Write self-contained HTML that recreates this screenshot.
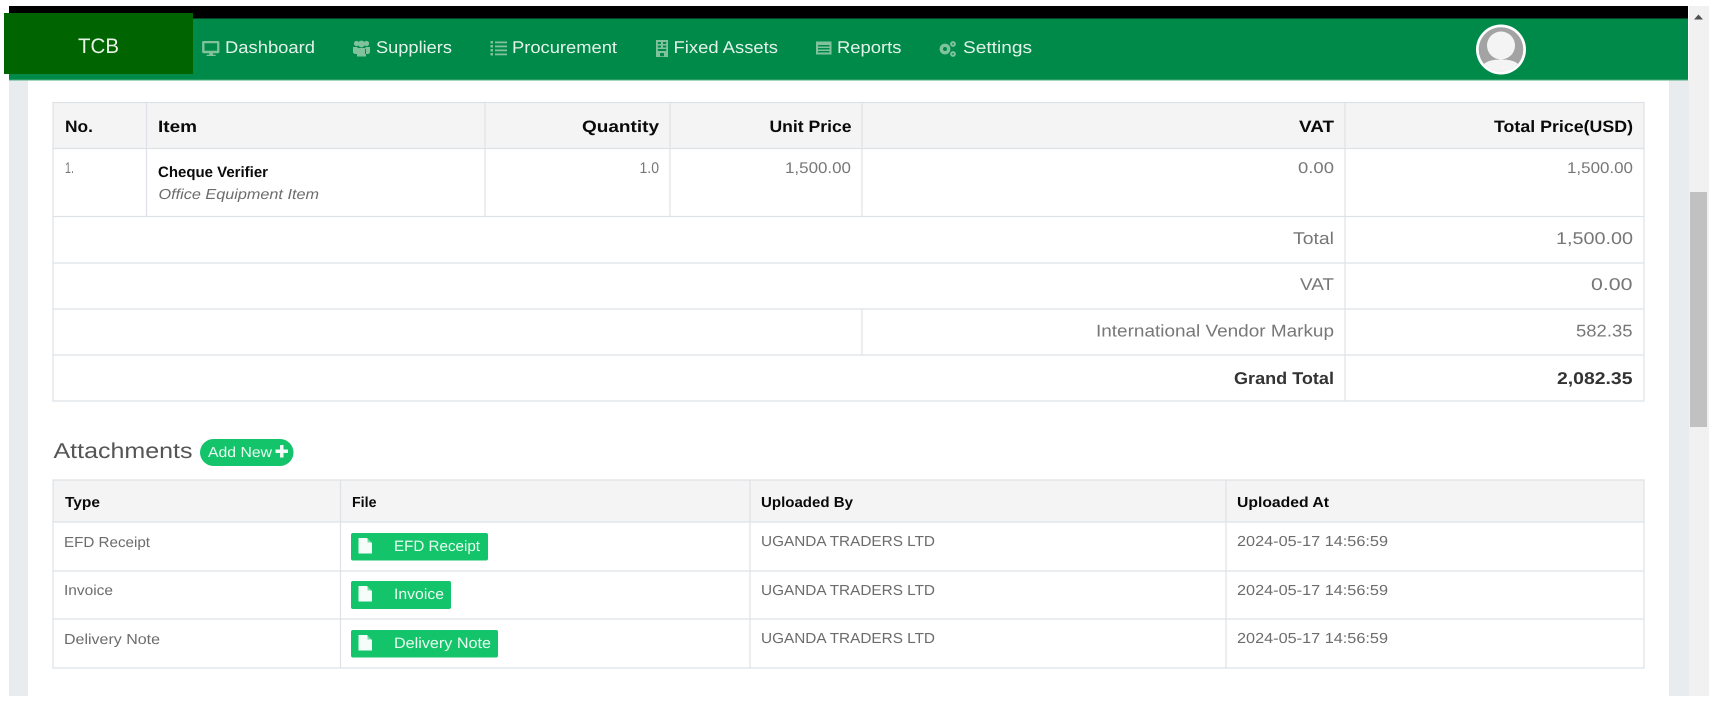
<!DOCTYPE html>
<html lang="en"><head><meta charset="utf-8"><title>TCB</title>
<style>
html,body{margin:0;padding:0;background:#fff;width:1718px;height:704px;overflow:hidden}
svg{display:block;filter:blur(.3px)}
text{font-family:"Liberation Sans",sans-serif;text-rendering:geometricPrecision}
.nav{font-size:17px;fill:#e2f2e8}
.th{font-size:16.5px;font-weight:bold;fill:#0a0a0a}
.td{font-size:15.5px;fill:#777}
.tl{font-size:17px;fill:#777}
.b{font-size:17px;font-weight:bold;fill:#333}
.t2h{font-size:14.5px;font-weight:bold;fill:#0a0a0a}
.t2{font-size:14.5px;fill:#6c6c6c}
.btn{font-size:15px;fill:#e8fbf0}
.l{stroke:#dee2e6;stroke-width:1.2;fill:none}
.ic{fill:#7fc29c}
</style></head><body>
<svg width="1718" height="704" viewBox="0 0 1718 704" xmlns="http://www.w3.org/2000/svg">
<rect width="1718" height="704" fill="#fff"/>
<!-- side gutters + scrollbar -->
<rect x="9" y="80" width="19" height="616" fill="#e9ecef"/>
<rect x="1669" y="80" width="20" height="616" fill="#e9ecef"/>
<rect x="1689" y="6" width="20" height="690" fill="#f1f1f1"/>
<path d="M1694 19.5L1698.5 14.5L1703 19.5Z" fill="#505050"/>
<rect x="1690" y="192" width="17" height="235" fill="#c1c1c1"/>
<!-- header -->
<rect x="9" y="6" width="1679" height="12.5" fill="#000"/>
<rect x="9" y="18.5" width="1679" height="61.5" fill="#008a4a"/>
<rect x="9" y="79.5" width="1679" height="1" fill="#4fae7d"/>
<rect x="4" y="13" width="189" height="61" fill="#006400"/>
<text x="78" y="53" font-size="21" fill="#e8f3e8" textLength="41" lengthAdjust="spacingAndGlyphs">TCB</text>

<!-- nav icons -->
<path class="ic" fill-rule="evenodd" d="M203.5 41h14.500a1.400 1.400 0 0 1 1.400 1.400v9.400a1.400 1.400 0 0 1-1.400 1.400h-5v1.600h2.600v1.200h-9v-1.200h2.600v-1.600h-5.700a1.400 1.400 0 0 1-1.400-1.400v-9.400a1.400 1.400 0 0 1 1.400-1.400zM204.500 43.200v7.600h12.600v-7.600z"/>
<g class="ic"><circle cx="356.500" cy="43.500" r="2.600"/><circle cx="366.500" cy="43.500" r="2.600"/><circle cx="361.500" cy="44" r="3.400"/><path d="M353 47h4l1 1v6h-3.500l-1.500-1.500zM370 47h-4l-1 1v6h3.500l1.500-1.500zM358.500 48h6l1.500 1.500v7h-9v-7z"/></g>
<g class="ic"><rect x="495" y="41.500" width="12" height="1.800"/><rect x="495" y="45.500" width="12" height="1.800"/><rect x="495" y="49.500" width="12" height="1.800"/><rect x="495" y="53.500" width="12" height="1.800"/><rect x="490.500" y="41" width="2.500" height="2.500"/><rect x="490.500" y="45" width="2.500" height="2.500"/><rect x="490.500" y="49" width="2.500" height="2.500"/><rect x="490.500" y="53" width="2.500" height="2.500"/></g>
<path class="ic" fill-rule="evenodd" d="M656 40h12v17h-12zM657.800 42v2h3.200v-2zM663 42v2h3.200v-2zM657.800 45.500v2h3.200v-2zM663 45.500v2h3.200v-2zM657.800 49v2h8.400v-2zM660 53v3.200h4v-3.200z"/>
<path class="ic" fill-rule="evenodd" d="M816 41.500h15.500v13h-15.500zM818 45v1.500h11.500v-1.500zM818 48v1.500h11.500v-1.500zM818 51v1.500h11.500v-1.500z"/>
<g fill="none" stroke="#7fc29c"><circle cx="945" cy="49" r="3.700" stroke-width="3.400"/><circle cx="953" cy="44" r="1.900" stroke-width="2"/><circle cx="953" cy="54" r="1.900" stroke-width="2"/></g>

<!-- nav text -->
<text class="nav" x="225" y="53" textLength="90" lengthAdjust="spacingAndGlyphs">Dashboard</text>
<text class="nav" x="376" y="53" textLength="76" lengthAdjust="spacingAndGlyphs">Suppliers</text>
<text class="nav" x="512" y="53" textLength="105" lengthAdjust="spacingAndGlyphs">Procurement</text>
<text class="nav" x="673.500" y="53" textLength="104.500" lengthAdjust="spacingAndGlyphs">Fixed Assets</text>
<text class="nav" x="837" y="53" textLength="64.500" lengthAdjust="spacingAndGlyphs">Reports</text>
<text class="nav" x="963" y="53" textLength="69" lengthAdjust="spacingAndGlyphs">Settings</text>

<!-- avatar -->
<circle cx="1501" cy="49.500" r="25" fill="#fff"/>
<circle cx="1501" cy="49.500" r="22.300" fill="#a3a3a3"/>
<circle cx="1501" cy="45.500" r="14" fill="#f4f4f4"/>
<path d="M1484 64c3-3 9-4.500 17-4.500s14 1.500 17 4.500a22.300 22.300 0 0 1-34 0z" fill="#f4f4f4"/>

<!-- table 1 -->
<rect x="53" y="102.500" width="1591" height="46" fill="#f4f4f4"/>
<path class="l" d="M53 102.500H1644V401H53ZM53 148.500H1644M53 216.500H1644M53 263H1644M53 309H1644M53 355H1644M146.500 102.500V216.500M485 102.500V216.500M670 102.500V216.500M862 102.500V216.500M1345 102.500V401M862 309V355"/>
<text class="th" x="65" y="132" textLength="28" lengthAdjust="spacingAndGlyphs">No.</text>
<text class="th" x="158" y="132" textLength="39" lengthAdjust="spacingAndGlyphs">Item</text>
<text class="th" x="582" y="132" textLength="77" lengthAdjust="spacingAndGlyphs">Quantity</text>
<text class="th" x="769.500" y="132" textLength="82" lengthAdjust="spacingAndGlyphs">Unit Price</text>
<text class="th" x="1299" y="132" textLength="35" lengthAdjust="spacingAndGlyphs">VAT</text>
<text class="th" x="1494" y="132" textLength="139" lengthAdjust="spacingAndGlyphs">Total Price(USD)</text>

<text class="td" x="65" y="173" textLength="9" lengthAdjust="spacingAndGlyphs">1.</text>
<text x="158" y="177" font-size="15" font-weight="bold" fill="#0a0a0a" textLength="110" lengthAdjust="spacingAndGlyphs">Cheque Verifier</text>
<text x="158.500" y="199" font-size="14.500" font-style="italic" fill="#6c6c6c" textLength="160.500" lengthAdjust="spacingAndGlyphs">Office Equipment Item</text>
<text class="td" x="639.500" y="173" textLength="19.500" lengthAdjust="spacingAndGlyphs">1.0</text>
<text class="td" x="785" y="173" textLength="66" lengthAdjust="spacingAndGlyphs">1,500.00</text>
<text class="td" x="1298" y="173" textLength="36" lengthAdjust="spacingAndGlyphs">0.00</text>
<text class="td" x="1567" y="173" textLength="66" lengthAdjust="spacingAndGlyphs">1,500.00</text>

<text class="tl" x="1293" y="244" textLength="41" lengthAdjust="spacingAndGlyphs">Total</text>
<text class="tl" x="1556" y="244" textLength="77" lengthAdjust="spacingAndGlyphs">1,500.00</text>
<text class="tl" x="1300" y="290" textLength="34" lengthAdjust="spacingAndGlyphs">VAT</text>
<text class="tl" x="1591" y="290" textLength="41.500" lengthAdjust="spacingAndGlyphs">0.00</text>
<text class="tl" x="1096" y="336.500" textLength="238" lengthAdjust="spacingAndGlyphs">International Vendor Markup</text>
<text class="tl" x="1576" y="336.500" textLength="56.500" lengthAdjust="spacingAndGlyphs">582.35</text>
<text class="b" x="1234" y="384" textLength="100" lengthAdjust="spacingAndGlyphs">Grand Total</text>
<text class="b" x="1557" y="384" textLength="75.500" lengthAdjust="spacingAndGlyphs">2,082.35</text>

<!-- attachments -->
<text x="53.500" y="458" font-size="21.500" fill="#555" textLength="139" lengthAdjust="spacingAndGlyphs">Attachments</text>
<rect x="200" y="439" width="93.500" height="27" rx="13.500" fill="#14c46b"/>
<text x="208" y="457" font-size="14.500" fill="#e8fbf0" textLength="64" lengthAdjust="spacingAndGlyphs">Add New</text>
<path d="M280 445h3.500v4.500h4.500v3.500h-4.500v4.500h-3.500v-4.500h-4.500v-3.500h4.500z" fill="#f2fdf7"/>

<!-- table 2 -->
<rect x="53" y="480" width="1591" height="42" fill="#f4f4f4"/>
<path class="l" d="M53 480H1644V668H53ZM53 522H1644M53 571H1644M53 619H1644M340.500 480V668M750 480V668M1226 480V668"/>
<text class="t2h" x="65" y="507" textLength="35" lengthAdjust="spacingAndGlyphs">Type</text>
<text class="t2h" x="352" y="507" textLength="24.500" lengthAdjust="spacingAndGlyphs">File</text>
<text class="t2h" x="761" y="507" textLength="92" lengthAdjust="spacingAndGlyphs">Uploaded By</text>
<text class="t2h" x="1237" y="507" textLength="92" lengthAdjust="spacingAndGlyphs">Uploaded At</text>

<text class="t2" x="64" y="547" textLength="86" lengthAdjust="spacingAndGlyphs">EFD Receipt</text>
<text class="t2" x="64" y="595" textLength="49" lengthAdjust="spacingAndGlyphs">Invoice</text>
<text class="t2" x="64" y="644" textLength="96" lengthAdjust="spacingAndGlyphs">Delivery Note</text>

<rect x="351" y="533" width="137" height="27.500" rx="2" fill="#14c46b"/>
<rect x="351" y="581" width="100" height="28" rx="2" fill="#14c46b"/>
<rect x="351" y="630" width="147" height="27.500" rx="2" fill="#14c46b"/>
<path d="M358.500 538h8.500l5 5v10.500h-13.500z" fill="#f4fdf8"/>
<path d="M358.500 586h8.500l5 5v10.500h-13.500z" fill="#f4fdf8"/>
<path d="M358.500 635h8.500l5 5v10.500h-13.500z" fill="#f4fdf8"/>
<path d="M367.500 538.500v4h4zM367.500 586.500v4h4zM367.500 635.500v4h4z" fill="#14c46b" opacity=".6"/>
<text class="btn" x="394" y="551" textLength="86" lengthAdjust="spacingAndGlyphs">EFD Receipt</text>
<text class="btn" x="394" y="599" textLength="50" lengthAdjust="spacingAndGlyphs">Invoice</text>
<text class="btn" x="394" y="648" textLength="97" lengthAdjust="spacingAndGlyphs">Delivery Note</text>

<text class="t2" x="761" y="546" textLength="174" lengthAdjust="spacingAndGlyphs">UGANDA TRADERS LTD</text>
<text class="t2" x="761" y="595" textLength="174" lengthAdjust="spacingAndGlyphs">UGANDA TRADERS LTD</text>
<text class="t2" x="761" y="643" textLength="174" lengthAdjust="spacingAndGlyphs">UGANDA TRADERS LTD</text>
<text class="t2" x="1237" y="546" textLength="151" lengthAdjust="spacingAndGlyphs">2024-05-17 14:56:59</text>
<text class="t2" x="1237" y="595" textLength="151" lengthAdjust="spacingAndGlyphs">2024-05-17 14:56:59</text>
<text class="t2" x="1237" y="643" textLength="151" lengthAdjust="spacingAndGlyphs">2024-05-17 14:56:59</text>
</svg>
</body></html>
